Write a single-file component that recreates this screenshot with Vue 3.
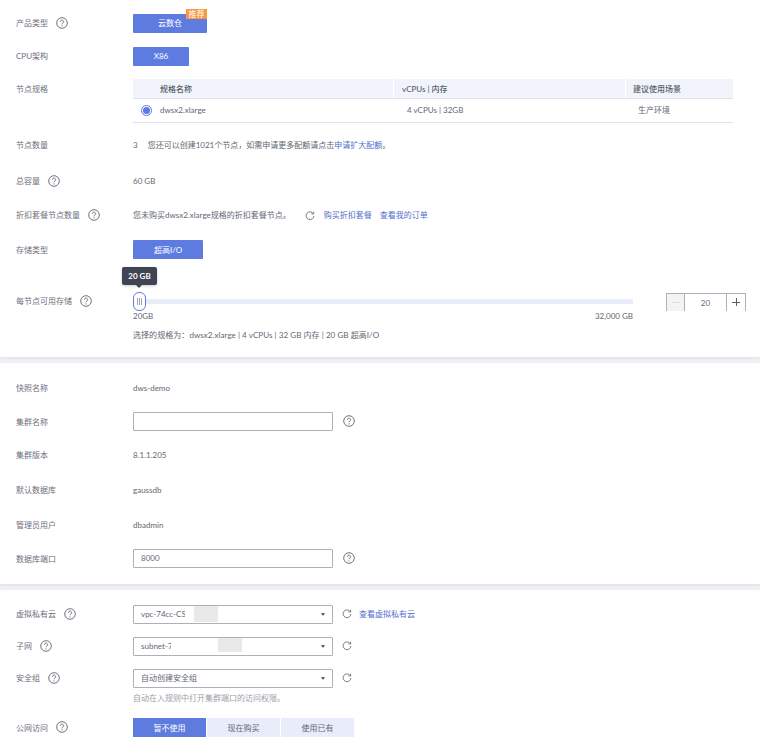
<script setup>
const columns = [
  { name: '规格名称', cls: 'c1' },
  { name: 'vCPUs | 内存', cls: 'c2' },
  { name: '建议使用场景', cls: 'c3' }
]
</script>

<template>
  <main class="page">
    <section class="sec s1">
      <div class="row r1">
        <div class="label">产品类型<svg class="help" viewBox="0 0 12 12"><circle cx="6" cy="6" r="5.3"/><path d="M4.4 4.7a1.6 1.6 0 1 1 2.5 1.3c-.6.4-.9.7-.9 1.3"/><path d="M6 8.4v1"/></svg></div>
        <div class="btn w74 badge-wrap">云数仓<span class="badge">推荐</span></div>
      </div>
      <div class="row r2">
        <div class="label">CPU架构</div>
        <div class="btn w56">X86</div>
      </div>
      <div class="row r3">
        <div class="label">节点规格</div>
        <div class="table">
          <div class="thead">
            <div v-for="c in columns" :key="c.cls" :class="['th', c.cls]">{{ c.name }}</div>
          </div>
          <div class="tbody">
            <div class="td c1"><span class="radio"><i></i></span>dwsx2.xlarge</div>
            <div class="td c2">4 vCPUs | 32GB</div>
            <div class="td c3">生产环境</div>
          </div>
        </div>
      </div>
      <div class="row r4">
        <div class="label">节点数量</div>
        <div class="text"><span class="num">3</span>您还可以创建1021个节点，如需申请更多配额请点击<span class="linkish">申请扩大配额</span>。</div>
      </div>
      <div class="row r5">
        <div class="label">总容量<svg class="help" viewBox="0 0 12 12"><circle cx="6" cy="6" r="5.3"/><path d="M4.4 4.7a1.6 1.6 0 1 1 2.5 1.3c-.6.4-.9.7-.9 1.3"/><path d="M6 8.4v1"/></svg></div>
        <div class="text">60 GB</div>
      </div>
      <div class="row r6">
        <div class="label">折扣套餐节点数量<svg class="help" viewBox="0 0 12 12"><circle cx="6" cy="6" r="5.3"/><path d="M4.4 4.7a1.6 1.6 0 1 1 2.5 1.3c-.6.4-.9.7-.9 1.3"/><path d="M6 8.4v1"/></svg></div>
        <div class="text flexline">
          <span>您未购买dwsx2.xlarge规格的折扣套餐节点。</span>
          <svg class="refresh first" viewBox="0 0 12 12"><path d="M10 3.2A4.7 4.7 0 1 0 10.7 6"/><path d="M10.4 .9v2.7H7.7"/></svg>
          <span class="link">购买折扣套餐</span>
          <span class="link second">查看我的订单</span>
        </div>
      </div>
      <div class="row r7">
        <div class="label">存储类型</div>
        <div class="btn w70">超高I/O</div>
      </div>
      <div class="row r8">
        <div class="label">每节点可用存储<svg class="help" viewBox="0 0 12 12"><circle cx="6" cy="6" r="5.3"/><path d="M4.4 4.7a1.6 1.6 0 1 1 2.5 1.3c-.6.4-.9.7-.9 1.3"/><path d="M6 8.4v1"/></svg></div>
        <div class="slider">
          <div class="track"></div>
          <div class="handle"><i></i><i></i><i></i></div>
          <div class="tip">20 GB</div>
          <div class="ends"><span>20GB</span><span>32,000 GB</span></div>
          <div class="summary">选择的规格为：dwsx2.xlarge | 4 vCPUs | 32 GB 内存 | 20 GB 超高I/O</div>
        </div>
        <div class="stepper">
          <span class="minus"></span>
          <span class="val">20</span>
          <span class="plus"></span>
        </div>
      </div>
    </section>

    <section class="sec s2">
      <div class="row a1">
        <div class="label">快照名称</div>
        <div class="text">dws-demo</div>
      </div>
      <div class="row a2">
        <div class="label">集群名称</div>
        <div class="input"></div>
        <svg class="help after" viewBox="0 0 12 12"><circle cx="6" cy="6" r="5.3"/><path d="M4.4 4.7a1.6 1.6 0 1 1 2.5 1.3c-.6.4-.9.7-.9 1.3"/><path d="M6 8.4v1"/></svg>
      </div>
      <div class="row a3">
        <div class="label">集群版本</div>
        <div class="text">8.1.1.205</div>
      </div>
      <div class="row a3">
        <div class="label">默认数据库</div>
        <div class="text">gaussdb</div>
      </div>
      <div class="row a3">
        <div class="label">管理员用户</div>
        <div class="text">dbadmin</div>
      </div>
      <div class="row a6">
        <div class="label">数据库端口</div>
        <div class="input">8000</div>
        <svg class="help after" viewBox="0 0 12 12"><circle cx="6" cy="6" r="5.3"/><path d="M4.4 4.7a1.6 1.6 0 1 1 2.5 1.3c-.6.4-.9.7-.9 1.3"/><path d="M6 8.4v1"/></svg>
      </div>
    </section>

    <section class="sec s3">
      <div class="row b1">
        <div class="label">虚拟私有云<svg class="help" viewBox="0 0 12 12"><circle cx="6" cy="6" r="5.3"/><path d="M4.4 4.7a1.6 1.6 0 1 1 2.5 1.3c-.6.4-.9.7-.9 1.3"/><path d="M6 8.4v1"/></svg></div>
        <div class="input select">vpc-74cc-CS<span class="mask m1"><b></b></span><span class="caret"></span></div>
        <svg class="refresh after2" viewBox="0 0 12 12"><path d="M10 3.2A4.7 4.7 0 1 0 10.7 6"/><path d="M10.4 .9v2.7H7.7"/></svg>
        <span class="link vpc">查看虚拟私有云</span>
      </div>
      <div class="row b2">
        <div class="label">子网<svg class="help" viewBox="0 0 12 12"><circle cx="6" cy="6" r="5.3"/><path d="M4.4 4.7a1.6 1.6 0 1 1 2.5 1.3c-.6.4-.9.7-.9 1.3"/><path d="M6 8.4v1"/></svg></div>
        <div class="input select">subnet-7<span class="mask m2"><b></b></span><span class="caret"></span></div>
        <svg class="refresh after2" viewBox="0 0 12 12"><path d="M10 3.2A4.7 4.7 0 1 0 10.7 6"/><path d="M10.4 .9v2.7H7.7"/></svg>
      </div>
      <div class="row b2">
        <div class="label">安全组<svg class="help" viewBox="0 0 12 12"><circle cx="6" cy="6" r="5.3"/><path d="M4.4 4.7a1.6 1.6 0 1 1 2.5 1.3c-.6.4-.9.7-.9 1.3"/><path d="M6 8.4v1"/></svg></div>
        <div class="input select">自动创建安全组<span class="caret"></span></div>
        <svg class="refresh after2" viewBox="0 0 12 12"><path d="M10 3.2A4.7 4.7 0 1 0 10.7 6"/><path d="M10.4 .9v2.7H7.7"/></svg>
      </div>
      <div class="hint">自动在入规则中打开集群端口的访问权限。</div>
      <div class="row b4">
        <div class="label">公网访问<svg class="help" viewBox="0 0 12 12"><circle cx="6" cy="6" r="5.3"/><path d="M4.4 4.7a1.6 1.6 0 1 1 2.5 1.3c-.6.4-.9.7-.9 1.3"/><path d="M6 8.4v1"/></svg></div>
        <div class="segs">
          <span class="seg on">暂不使用</span>
          <span class="seg">现在购买</span>
          <span class="seg">使用已有</span>
        </div>
      </div>
    </section>
  </main>
</template>

<style>
html, body { margin: 0; background: #fff; }
</style>

<style scoped>
.page {
  width: 760px;
  height: 744px;
  overflow: hidden;
  background: #f0f1f5;
  font-family: "Lato", "Noto Sans CJK SC", sans-serif;
  font-size: 8px;
  line-height: 19px;
  color: #626773;
}
.sec { background: #fff; box-shadow: 0 1px 3px rgba(0,0,0,.08); }
.s1 { height: 357px; padding-top: 14px; box-sizing: border-box; margin-bottom: 6px; }
.s2 { height: 221px; padding-top: 15px; box-sizing: border-box; margin-bottom: 6px; }
.s3 { height: 154px; padding-top: 15px; box-sizing: border-box; }
.row { display: flex; align-items: flex-start; position: relative; height: 19px; }
.label { width: 133px; padding-left: 16px; box-sizing: border-box; flex: none; display: flex; align-items: center; height: 19px; color: #6b707b; }
.r3 .label, .r7 .label, .s2 .label, .b4 .label { height: 21px; }
.s2 .text { line-height: 21px; }
.help { width: 12px; height: 12px; margin-left: 8px; margin-top: -1px; flex: none; fill: none; stroke: #5f6470; stroke-width: .9; }
.help.after { margin-left: 10px; margin-top: 3px; }
.b4 .help { margin-top: -3px; }
.btn { height: 19px; border-radius: 1px; background: #5e7ce0; color: #fff; text-align: center; position: relative; }
.w74 { width: 74px; }
.w56 { width: 56px; }
.w70 { width: 70px; line-height: 21px; }
.badge { position: absolute; right: 0; top: -5px; width: 21px; height: 10px; line-height: 10px; background: #fa9841; color: #fff; font-size: 8px; text-align: center; }
.r2 { margin-top: 14px; }
.r3 { margin-top: 13px; height: 44px; }
.table { width: 600px; }
.thead { display: flex; height: 19px; background: #f1f4fb; border-bottom: 1px solid #dfe1e6; color: #575d6c; font-weight: 500; }
.th { box-sizing: border-box; line-height: 20px; }
.th.c1 { width: 261px; padding-left: 27px; border-right: 1px solid #fff; }
.th.c2 { width: 232px; padding-left: 8px; border-right: 1px solid #fff; }
.th.c3 { width: 107px; padding-left: 7px; }
.tbody { display: flex; height: 24px; box-sizing: border-box; border-bottom: 1px solid #dfe1e6; align-items: center; }
.td { box-sizing: border-box; display: flex; align-items: center; }
.td.c1 { width: 261px; padding-left: 8px; }
.td.c2 { width: 232px; padding-left: 13px; }
.td.c3 { width: 107px; padding-left: 12px; }
.radio { width: 11px; height: 11px; box-sizing: border-box; border: 1px solid #5e7ce0; border-radius: 50%; margin-right: 8px; display: flex; align-items: center; justify-content: center; }
.radio i { width: 7px; height: 7px; border-radius: 50%; background: #5e7ce0; }
.r4 { margin-top: 13px; }
.num { margin-right: 10px; }
.linkish { color: #526ecc; }
.r5 { margin-top: 17px; }
.r6 { margin-top: 15px; }
.r7 { margin-top: 15px; }
.flexline { display: flex; align-items: center; }
.refresh { width: 10px; height: 10px; fill: none; stroke: #5f6470; stroke-width: 1; flex: none; }
.refresh.first { margin-left: 14px; margin-right: 9px; }
.link { color: #526ecc; }
.link.second { margin-left: 8px; }
.r8 { margin-top: 33px; }
.slider { position: relative; width: 500px; height: 19px; }
.track { position: absolute; left: 0; right: 0; top: 7px; height: 5px; background: #e9edfa; }
.handle { position: absolute; left: 0; top: 0; width: 13px; height: 19px; box-sizing: border-box; border: 1px solid #5e7ce0; border-radius: 6px; background: #fff; display: flex; align-items: center; justify-content: center; gap: 1px; }
.handle i { width: 1px; height: 7px; background: #9aa3b8; }
.tip { position: absolute; left: -11px; top: -25px; width: 35px; height: 18px; line-height: 18px; border-radius: 2px; background: #3f4454; color: #fff; text-align: center; font-weight: 700; box-shadow: 0 1px 3px rgba(0,0,0,.2); }
.tip::after { content: ""; position: absolute; left: 14px; bottom: -3px; border: 3px solid transparent; border-bottom: 0; border-top-color: #3f4454; }
.ends { position: absolute; left: 0; right: 0; top: 15px; display: flex; justify-content: space-between; }
.summary { position: absolute; left: 0; top: 34px; white-space: nowrap; letter-spacing: .06px; }
.stepper { position: absolute; left: 666px; top: 1px; width: 80px; height: 18px; box-sizing: border-box; border: 1px solid #adb0b8; border-bottom: 0; display: flex; }
.minus { width: 17px; background: #f3f3f3; border-right: 1px solid #adb0b8; position: relative; }
.minus::after { content: ""; position: absolute; left: 5px; right: 4px; top: 8px; height: 1px; background: #dcdde0; }
.val { flex: 1; text-align: center; line-height: 19px; }
.plus { width: 18px; border-left: 1px solid #adb0b8; position: relative; }
.plus::before { content: ""; position: absolute; left: 5px; width: 8px; top: 8px; height: 1px; background: #575d6c; }
.plus::after { content: ""; position: absolute; left: 9px; height: 8px; top: 4px; width: 1px; background: #575d6c; }
.a2 { margin-top: 15px; }
.a3 { margin-top: 14px; }
.a3 + .a3 { margin-top: 16px; }
.a6 { margin-top: 15px; }
.input { width: 200px; height: 19px; box-sizing: border-box; border: 1px solid #adb0b8; border-radius: 1px; padding-left: 7px; line-height: 17px; position: relative; background: #fff; flex: none; }
.caret { position: absolute; right: 7px; top: 7px; border: 3px solid transparent; border-bottom: 0; border-width: 3px 2.5px 0; border-top-color: #575d6c; }
.mask { position: absolute; top: 0; height: 16px; background: #fff; }
.mask b { position: absolute; top: 0; display: block; background: #e9e9ea; }
.m1 { left: 51px; width: 80px; }
.m1 b { left: 9px; width: 24px; height: 16px; }
.m2 { left: 37px; width: 80px; }
.m2 b { left: 47px; width: 24px; height: 14px; }
.refresh.after2 { margin-left: 9px; margin-top: 4px; }
.vpc { margin-left: 7px; }
.b2 { margin-top: 13px; }
.hint { margin-left: 133px; height: 19px; line-height: 21px; color: #9a9ea8; }
.b4 { margin-top: 11px; }
.segs { display: flex; }
.seg { width: 73px; height: 19px; line-height: 21px; background: #e9edfa; text-align: center; margin-right: 1px; }
.seg.on { background: #5e7ce0; color: #fff; }
</style>
